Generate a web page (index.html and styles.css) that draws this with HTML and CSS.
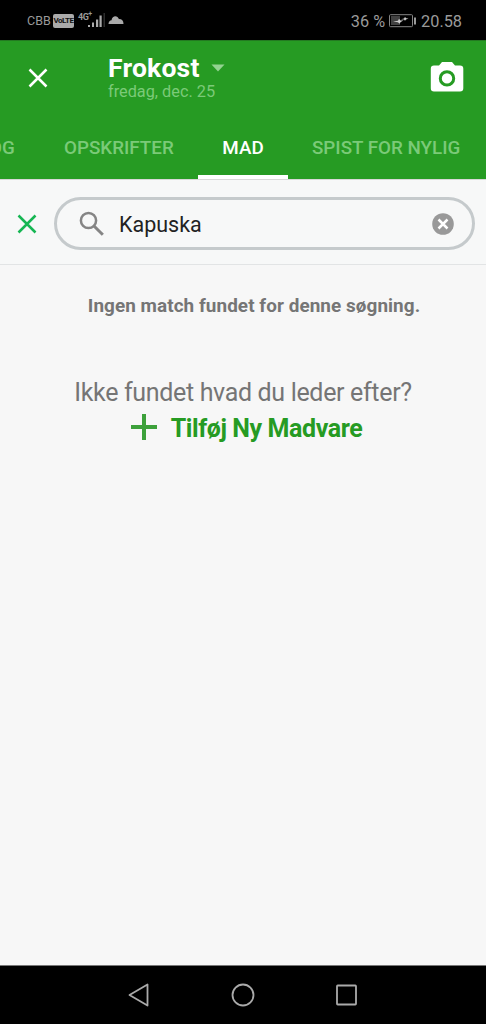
FILE: index.html
```html
<!DOCTYPE html>
<html lang="da">
<head>
<meta charset="utf-8">
<title>Frokost</title>
<link rel="stylesheet" href="styles.css">
</head>
<body>
<div class="screen">
  <div class="status">
    <span class="carrier">CBB</span>
    <span class="volte">VoLTE</span>
    <span class="network">4G<sup>+</sup></span>
    <svg class="signal" width="20" height="16" viewBox="0 0 20 16"><path d="M1 13h2v2H1zM5 10.500h2V15H5zM9 7.500h2.200V15H9zM12.500 3.500h2.200V15h-2.200z" fill="#aaa"/><path d="M16.500 1H18v14h-1.500z" fill="#2c2c2c"/></svg>
    <svg class="cloud" width="16" height="10" viewBox="0 0 16 10"><path d="M.5 9C.5 6.500 2 5.300 3.500 5.200 4.300.2 9.600.1 11 4.200 13.800 3.500 15.500 6 15.500 9z" fill="#aaa"/></svg>
    <span class="percent">36 %</span>
    <svg class="battery" width="28" height="14" viewBox="0 0 28 14"><rect x=".5" y=".7" width="23" height="12" rx="1" fill="none" stroke="#858585"/><path d="M2 2h9v9H2z" fill="#414141"/><path d="M4 7.500l5-.8 1-2 1.500 1.800 3-.2-3 2-1 1.500-1.500-1.600zM12 5.200l3-.7 1-1.500 1.200 1.300 2.300.2-2.500 1-1 1.200-1-1.200z" fill="#ccc"/><path d="M25 3.500h2v7h-2z" fill="#999"/></svg>
    <span class="time">20.58</span>
  </div>
  <header class="header">
    <div class="bar">
      <svg class="close" width="20" height="20" viewBox="0 0 20 20"><path d="M1.500 1.500l17 17M18.500 1.500l-17 17" stroke="#fff" stroke-width="2.500"/></svg>
      <div class="titles">
        <div class="title"><span>Frokost</span><svg class="caret" width="14" height="8" viewBox="0 0 14 8"><path d="M.5.500h13L7 7.500z" fill="#93d391"/></svg></div>
        <div class="date">fredag, dec. 25</div>
      </div>
      <svg class="camera" width="34" height="32" viewBox="0 0 34 32"><path fill-rule="evenodd" d="M12 1h10l3 3.500h5q3.300 0 3.300 3.200v19.500q0 3.300-3.300 3.300H4q-3.200 0-3.200-3.300V7.700Q.8 4.500 4 4.500h5zM17 9.200a8.200 8.200 0 1 0 0 16.400 8.200 8.200 0 0 0 0-16.400zM17 12.200a5.200 5.200 0 1 1 0 10.400 5.200 5.200 0 0 1 0-10.400z" fill="#fff"/></svg>
    </div>
    <nav class="tabs">
      <span class="tab tab-first">OG</span>
      <span class="tab tab-recipes">OPSKRIFTER</span>
      <span class="tab tab-active">MAD</span>
      <span class="tab tab-recent">SPIST FOR NYLIG</span>
    </nav>
  </header>
  <div class="search-row">
    <svg class="cancel" width="20" height="20" viewBox="0 0 20 20"><path d="M1.500 1.500l17 17M18.500 1.500l-17 17" stroke="#16b653" stroke-width="2.500"/></svg>
    <div class="search">
      <svg class="lens" width="26" height="26" viewBox="0 0 26 26" fill="none" stroke="#858585"><circle cx="9.500" cy="9.500" r="7.600" stroke-width="2.500"/><path d="M15 15l8.800 8.800" stroke-width="3"/></svg>
      <span class="query">Kapuska</span>
      <svg class="clear" width="22" height="22" viewBox="0 0 22 22"><circle cx="11" cy="11" r="10.800" fill="#999"/><path d="M6.500 6.500l9 9M15.500 6.500l-9 9" stroke="#fff" stroke-width="2.500"/></svg>
    </div>
  </div>
  <main class="content">
    <div class="empty">Ingen match fundet for denne søgning.</div>
    <div class="question">Ikke fundet hvad du leder efter?</div>
    <div class="add"><svg class="plus" width="26" height="26" viewBox="0 0 26 26"><path d="M13 0v26M0 13h26" stroke="#3da13b" stroke-width="4"/></svg><span>Tilføj Ny Madvare</span></div>
  </main>
  <footer class="nav">
    <svg width="22" height="24" viewBox="0 0 22 24"><path d="M19.500 1.500v21L1.500 12z"/></svg>
    <svg width="24" height="24" viewBox="0 0 24 24"><circle cx="12" cy="12" r="10.500"/></svg>
    <svg width="22" height="22" viewBox="0 0 22 22"><rect x="1" y="1.500" width="19" height="19" rx=".7"/></svg>
  </footer>
</div>
</body>
</html>
```
FILE: styles.css
```css
* { box-sizing: border-box; }
body { margin: 0; font-family: Roboto, "Liberation Sans", sans-serif; }
svg { display: block; flex: none; }
.screen { width: 486px; height: 1024px; display: flex; flex-direction: column; background: #f7f7f7; overflow: hidden; white-space: nowrap; }

.status { height: 40px; flex: none; display: flex; align-items: center; background: #000; color: #9a9a9a; padding: 1px 24px 0 27px; }
.carrier { font-size: 12.500px; width: 26px; }
.volte { width: 21px; height: 14px; border-radius: 2px; background: #aaa; color: #111; font-size: 8px; font-weight: 700; line-height: 14px; text-align: center; letter-spacing: -0.500px; }
.network { font-size: 9px; font-weight: 700; width: 13px; margin: -8px 0 0 4px; line-height: 10px; letter-spacing: -0.500px; }
.network sup { font-size: 7px; line-height: 0; }
.signal { margin: -1px 0 0 -4px; }
.cloud { margin: -2px 0 0 1px; }
.percent { margin-left: auto; font-size: 16.300px; padding-top: 1px; }
.battery { margin: 0 4px 0 4px; }
.time { font-size: 16.300px; padding-top: 1px; }

.header { height: 140px; flex: none; background: #269b23; border-top: 1px solid #237a21; border-bottom: 1px solid #d8d8d8; }
.bar { height: 75px; display: flex; align-items: center; padding: 0 22px 0 28px; }
.close { margin-bottom: 1px; }
.titles { margin: -2px 0 0 60px; }
.title { display: flex; align-items: center; color: #fff; font-size: 26.500px; line-height: 28px; font-weight: 700; letter-spacing: 0.200px; }
.caret { margin-left: 11px; }
.date { color: #7bca78; font-size: 16.300px; line-height: 20px; }
.camera { margin: -4px 0 0 auto; }
.tabs { height: 63px; display: flex; color: #7bca78; font-size: 18.800px; font-weight: 500; line-height: 64px; }
.tab { flex: none; }
.tab-first { width: 64px; margin-left: -11px; }
.tab-recipes { width: 134px; margin-left: 11px; }
.tab-active { width: 90px; color: #fff; text-align: center; border-bottom: 4px solid #fff; }
.tab-recent { margin-left: 24px; }

.search-row { height: 85px; flex: none; display: flex; align-items: center; padding: 3px 11px 0 17px; border-bottom: 1px solid #e2e4e5; background: #f7f8f8; }
.search { width: 421px; height: 53px; margin-left: 17px; border: 3px solid #c5cacc; border-radius: 27px; display: flex; align-items: center; padding: 0 18px 0 22px; }
.query { margin-left: 14px; padding-top: 1px; color: #222; font-size: 21.500px; }
.clear { margin-left: auto; }

.content { flex: 1; display: flex; flex-direction: column; align-items: center; color: #757575; }
.empty { margin: 29px 0 0 22px; font-size: 18.900px; line-height: 24px; font-weight: 700; letter-spacing: 0.070px; }
.question { margin-top: 59px; font-size: 25px; line-height: 32px; letter-spacing: -0.330px; }
.add { display: flex; align-items: center; gap: 14px; margin: 3px 0 0 7px; color: #269b23; font-size: 25px; line-height: 34px; font-weight: 700; letter-spacing: -0.400px; }
.plus { margin-bottom: 5px; }

.nav { height: 59px; flex: none; border-top: 1px solid #777; background: #000; display: flex; align-items: center; justify-content: center; gap: 81px; }
.nav svg { fill: none; stroke: #aaa; stroke-width: 1.800; stroke-linejoin: round; }
```
